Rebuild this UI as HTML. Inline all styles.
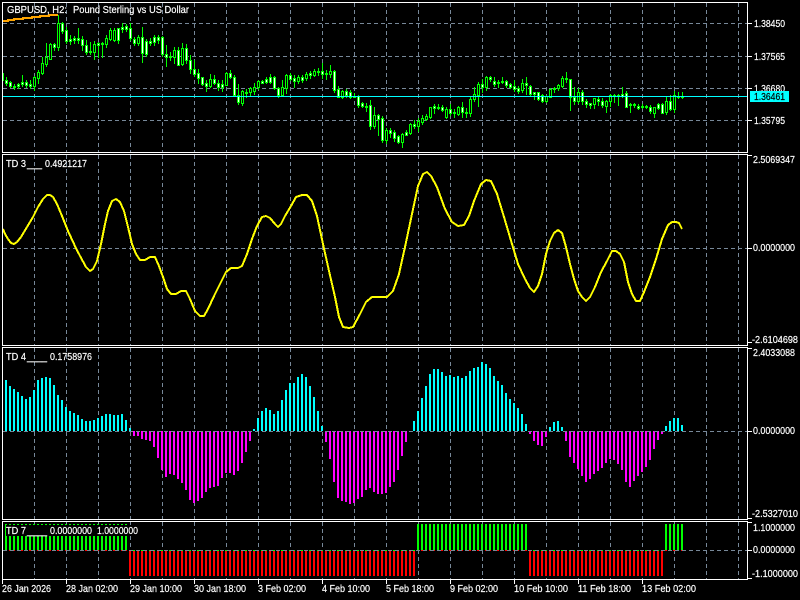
<!DOCTYPE html>
<html><head><meta charset="utf-8"><title>GBPUSD, H2</title>
<style>
html,body{margin:0;padding:0;background:#000;width:800px;height:600px;overflow:hidden}
svg{display:block;position:absolute;left:0;top:0}
text{font-family:"Liberation Sans",sans-serif;font-size:10.5px;fill:#fff;stroke:#fff;stroke-width:.2px}
</style></head><body>
<svg xmlns="http://www.w3.org/2000/svg" width="800" height="600" viewBox="0 0 800 600">
<rect width="800" height="600" fill="#000"/>
<g id="grid" shape-rendering="crispEdges"></g>
<g id="cand" shape-rendering="crispEdges"></g>
<polyline fill="none" stroke="#ffa500" stroke-width="2" shape-rendering="crispEdges" points="3,21 8,21 8,20 14,20 14,19 23,19 23,18 32,18 32,17 40,17 40,16 49,16 49,15 58,15"/>
<path d="M3 96.5H747" stroke="#00ffff" stroke-width="1" shape-rendering="crispEdges"/>
<polyline fill="none" stroke="#ffff00" stroke-width="2" stroke-linejoin="round" shape-rendering="crispEdges" points="3,229 5,234 8,239 11,243 14,244 17,242 21,237 27,227 33,217 38,207 43,199 47,195 50,195 53,197 57,204 62,216 68,231 74,244 80,256 86,267 90,271 93,269 97,261 101,244 105,224 108,211 112,201 116,199 120,202 124,211 128,227 132,244 136,254 140,260 145,260 150,257 155,257 159,266 163,277 167,289 171,294 176,294 181,291 186,291 190,299 195,311 200,316 204,316 208,309 214,296 220,284 226,272 231,268 238,268 242,266 247,254 252,239 257,226 262,217 266,216 270,218 275,224 278,227 281,224 285,216 291,206 296,197 302,195 307,195 312,201 317,216 323,244 329,271 335,297 339,317 343,327 349,328 353,327 360,314 366,302 372,297 380,297 387,297 393,291 399,274 405,247 412,214 418,186 423,174 427,172 431,176 437,187 445,209 452,222 458,226 464,225 469,216 474,201 481,184 486,180 491,181 497,194 504,217 512,244 518,264 525,279 530,288 534,292 538,286 542,274 546,254 550,241 554,233 558,230 562,233 566,247 570,264 574,279 578,291 582,297 586,301 590,297 595,287 601,272 607,261 612,251 616,251 620,254 624,262 628,282 632,294 636,301 640,301 644,292 650,277 656,259 662,239 668,225 672,222 676,222 679,223 682,229"/>
<g id="hist" shape-rendering="crispEdges"></g>
<rect x="6" y="525" width="134" height="11" fill="#000"/>
<g id="zero" shape-rendering="crispEdges"></g>
<path shape-rendering="crispEdges" fill="none" stroke="#fff" stroke-width="1" d="M2.5 2.5H747.5V152.5H2.5ZM2.5 154.5H747.5V345.5H2.5ZM2.5 347.5H747.5V519.5H2.5ZM2.5 521.5H747.5V579.5H2.5Z
M748 23.5h4M748 56.5h4M748 88.5h4M748 120.5h4M748 155.5h4M748 248.5h4M748 342.5h4M748 348.5h4M748 431.5h4M748 518.5h4M748 522.5h4M748 550.5h4M748 578.5h4
M2.5 580v4M66.5 580v4M130.5 580v4M194.5 580v4M258.5 580v4M322.5 580v4M386.5 580v4M450.5 580v4M514.5 580v4M578.5 580v4M642.5 580v4"/>
<text x="7" y="13" textLength="60" lengthAdjust="spacingAndGlyphs">GBPUSD, H2:</text>
<text x="73" y="13" textLength="116" lengthAdjust="spacingAndGlyphs">Pound Sterling vs US Dollar</text>
<text x="6" y="167" textLength="20" lengthAdjust="spacingAndGlyphs">TD 3</text>
<text x="27" y="167" textLength="15" lengthAdjust="spacingAndGlyphs">___</text>
<text x="45" y="167" textLength="42" lengthAdjust="spacingAndGlyphs">0.4921217</text>
<text x="6" y="360" textLength="20" lengthAdjust="spacingAndGlyphs">TD 4</text>
<text x="27" y="360" textLength="20" lengthAdjust="spacingAndGlyphs">____</text>
<text x="50" y="360" textLength="42" lengthAdjust="spacingAndGlyphs">0.1758976</text>
<text x="6" y="534" textLength="20" lengthAdjust="spacingAndGlyphs">TD 7</text>
<text x="27" y="534" textLength="20" lengthAdjust="spacingAndGlyphs">____</text>
<text x="50" y="534" textLength="42" lengthAdjust="spacingAndGlyphs">0.0000000</text>
<text x="97" y="534" textLength="41" lengthAdjust="spacingAndGlyphs">1.0000000</text>
<text x="754" y="27" textLength="31" lengthAdjust="spacingAndGlyphs">1.38450</text>
<text x="754" y="60" textLength="31" lengthAdjust="spacingAndGlyphs">1.37565</text>
<text x="754" y="92" textLength="31" lengthAdjust="spacingAndGlyphs">1.36680</text>
<text x="754" y="124" textLength="31" lengthAdjust="spacingAndGlyphs">1.35795</text>
<rect x="750" y="91" width="39" height="11" fill="#00ffff"/>
<text x="754" y="100" textLength="31" lengthAdjust="spacingAndGlyphs" style="fill:#000;stroke:#000">1.36461</text>
<text x="753" y="163" textLength="42" lengthAdjust="spacingAndGlyphs">2.5069347</text>
<text x="753" y="251" textLength="42" lengthAdjust="spacingAndGlyphs">0.0000000</text>
<text x="752" y="343" textLength="46" lengthAdjust="spacingAndGlyphs">-2.6104698</text>
<text x="753" y="356" textLength="42" lengthAdjust="spacingAndGlyphs">2.4033088</text>
<text x="753" y="434" textLength="42" lengthAdjust="spacingAndGlyphs">0.0000000</text>
<text x="752" y="517" textLength="46" lengthAdjust="spacingAndGlyphs">-2.5327010</text>
<text x="753" y="531" textLength="42" lengthAdjust="spacingAndGlyphs">1.1000000</text>
<text x="753" y="553" textLength="42" lengthAdjust="spacingAndGlyphs">0.0000000</text>
<text x="752" y="577" textLength="46" lengthAdjust="spacingAndGlyphs">-1.1000000</text>
<text x="2" y="592" textLength="49" lengthAdjust="spacingAndGlyphs">26 Jan 2026</text>
<text x="66" y="592" textLength="52" lengthAdjust="spacingAndGlyphs">28 Jan 02:00</text>
<text x="130" y="592" textLength="52" lengthAdjust="spacingAndGlyphs">29 Jan 10:00</text>
<text x="194" y="592" textLength="52" lengthAdjust="spacingAndGlyphs">30 Jan 18:00</text>
<text x="258" y="592" textLength="48" lengthAdjust="spacingAndGlyphs">3 Feb 02:00</text>
<text x="322" y="592" textLength="48" lengthAdjust="spacingAndGlyphs">4 Feb 10:00</text>
<text x="386" y="592" textLength="48" lengthAdjust="spacingAndGlyphs">5 Feb 18:00</text>
<text x="450" y="592" textLength="48" lengthAdjust="spacingAndGlyphs">9 Feb 02:00</text>
<text x="514" y="592" textLength="54" lengthAdjust="spacingAndGlyphs">10 Feb 10:00</text>
<text x="578" y="592" textLength="53" lengthAdjust="spacingAndGlyphs">11 Feb 18:00</text>
<text x="642" y="592" textLength="54" lengthAdjust="spacingAndGlyphs">13 Feb 02:00</text>
</svg>
<script>
(function(){
var C=[[77,85,80,83,1],[81,87,82,86,1],[84,89,86,87,1],[83,88,84,86,1],[75,86,82,84,1],[80,87,82,85,1],[80,88,84,86,1],[76,90,77,86,0],[70,83,72,78,0],[57,74,63,73,0],[43,66,57,64,0],[43,59,44,59,0],[43,50,44,47,1],[15,50,23,47,0],[22,33,23,31,1],[27,43,30,41,1],[35,44,39,41,1],[36,43,38,40,1],[28,43,38,40,1],[36,50,39,45,1],[40,54,45,52,1],[42,54,51,52,1],[41,59,44,52,0],[42,57,43,45,1],[42,57,43,44,1],[35,47,38,44,0],[28,40,30,39,0],[28,41,30,40,0],[28,43,28,40,1],[23,32,27,29,1],[24,31,26,29,1],[23,40,28,38,1],[37,45,39,43,1],[35,45,37,43,0],[27,62,37,53,1],[39,56,41,54,1],[38,45,41,43,1],[35,45,37,42,1],[35,43,37,40,1],[36,56,37,54,1],[45,66,54,57,1],[52,60,56,57,1],[47,63,50,57,0],[47,65,50,65,1],[43,65,48,64,0],[44,63,48,60,1],[55,73,60,69,1],[60,76,69,74,1],[69,83,73,78,1],[77,85,77,84,1],[80,91,83,86,1],[74,87,79,86,0],[75,84,79,83,1],[80,90,83,87,1],[80,91,84,87,1],[72,85,73,85,0],[70,78,73,77,1],[75,95,77,95,1],[84,104,95,102,1],[90,105,91,103,0],[89,97,92,93,1],[87,95,88,92,0],[83,94,87,91,0],[80,89,81,87,0],[80,83,81,83,1],[77,83,79,82,1],
[74,83,77,82,1],[76,89,77,88,1],[87,97,88,95,1],[80,95,87,95,0],[74,93,75,88,0],[73,80,75,79,1],[75,87,78,81,1],[75,83,77,81,0],[75,82,77,80,1],[72,80,74,78,0],[71,78,73,75,1],[69,76,71,75,0],[68,75,71,72,1],[63,78,71,74,1],[70,79,73,74,1],[65,77,71,74,0],[70,92,71,90,1],[86,97,89,97,1],[90,98,91,97,0],[89,97,91,95,1],[90,98,92,97,1],[93,97,96,97,1],[95,107,96,105,1],[102,107,103,106,1],[103,111,106,107,1],[100,129,105,126,1],[107,128,115,126,0],[114,135,115,119,1],[116,142,118,140,1],[128,143,130,140,0],[128,137,130,133,1],[130,141,132,138,1],[135,143,136,142,1],[133,147,134,142,0],[130,135,132,135,1],[123,134,124,133,0],[120,128,124,126,1],[118,131,121,126,0],[115,124,118,122,0],[114,120,116,119,0],[107,118,107,117,0],[104,113,106,108,1],[104,109,107,108,1],[105,111,107,110,1],[107,118,109,117,0],[104,115,109,113,1],[109,117,112,113,1],[106,115,107,114,0],[102,117,107,112,1],[108,117,112,113,1],[97,116,99,113,0],[87,101,94,99,0],[82,106,84,95,0],[79,92,84,87,1],[76,90,77,87,0],[76,81,77,79,1],[77,86,81,84,1],[80,87,82,83,1],[77,83,81,82,1],[80,87,81,85,1],[83,88,84,87,1],[80,91,86,89,1],[86,93,88,91,1],[79,92,83,90,0],[77,94,83,85,1],[85,95,86,94,1],[92,99,92,94,1],[92,100,92,99,1],
[94,102,95,101,1],[95,102,96,101,0],[88,97,89,97,0],[87,92,88,89,1],[84,90,85,88,0],[76,87,78,86,0],[72,82,78,79,1],[79,110,79,97,1],[87,104,97,101,1],[88,103,92,101,0],[90,104,92,101,1],[99,107,101,104,1],[103,108,103,105,1],[98,108,98,104,0],[97,105,99,101,1],[98,107,101,105,1],[100,112,101,106,0],[94,106,95,101,0],[94,102,95,96,1],[94,105,95,96,1],[87,97,94,96,1],[91,107,93,107,1],[103,112,104,105,1],[103,107,104,105,1],[104,109,106,108,1],[104,108,106,107,1],[105,108,106,107,1],[105,113,107,111,1],[107,117,107,113,0],[103,109,104,108,1],[103,113,104,113,1],[97,114,101,112,0],[95,110,101,109,1],[91,112,95,109,0],[92,98,96,97,1],[92,98,96,97,1]];
var s='',x=6,i,c;
s+='<path d="M3.5 73V81" stroke="#0f0"/>';
for(i=0;i<C.length;i++,x+=4){c=C[i];
 s+='<path d="M'+(x+.5)+' '+c[0]+'V'+(c[1]+1)+'" stroke="#0f0"/>';
 s+='<rect x="'+(x-.5)+'" y="'+(c[2]+.5)+'" width="2" height="'+Math.max(c[3]-c[2],1)+'" fill="'+(c[4]?'#fff':'#000')+'" stroke="#0f0"/>';
}
document.getElementById('cand').innerHTML=s;

var D="",k,y;
for(k=34;k<=738;k+=32){D+='M'+(k+.5)+' 3V152M'+(k+.5)+' 155V345M'+(k+.5)+' 348V519M'+(k+.5)+' 522V579';}
[23,56,88,120,248].forEach(function(v){D+='M3 '+(v+.5)+'H747';});
document.getElementById('grid').innerHTML='<path d="'+D+'" fill="none" stroke="#778899" stroke-dasharray="4 3"/>';

var H=[[6,'c',[120,138,147,156,168,177,171,150,120,114,111,114,135,165,180,201,213,219,225,237,243,243,240,234,228,222,222,225,225,222,240,264]],
[134,'m',[288,288,297,300,303,321,354,390,411,402,405,417,429,450,480,489,483,474,456,444,441,438,414,399,399,405,393,369,336,303]],
[254,'c',[267,234,213,204,210,222,213,180,150,129,129,111,102,111,138,171,213,258]],
[326,'m',[306,357,426,474,483,486,492,489,477,471,450,444,456,462,462,459,441,426,390,348,306]],
[414,'c',[243,213,174,138,102,87,87,96,108,105,111,108,114,108,93,84,81,66,72,84,108,123,135,159,177,189,204,222,252]],
[530,'m',[282,303,315,318,291]],
[550,'c',[261,246,243,261]],
[566,'m',[303,351,369,387,408,426,417,402,393,384,369,357,360,372,390,426,441,423,408,396,381,360,327,300,282]],
[666,'c',[258,243,234,234,255]]];
var pc='',pm='';
H.forEach(function(g){g[2].forEach(function(v,j){var X=g[0]+4*j,Y=Math.round(340+v/3);
 if(g[1]=='c')pc+='M'+X+' '+Y+'V431';else pm+='M'+X+' 431V'+Y;});});
var pg='',pr='',pgt='',prt='';
function seg(a,b,green){for(var X=a;X<=b;X+=4){if(green){pg+='M'+X+' 524V550';prt+='M'+X+' 550V551';}else{pr+='M'+X+' 551V576';pgt+='M'+X+' 550V551';}}}
seg(6,126,1);seg(130,414,0);seg(418,526,1);seg(530,662,0);seg(666,682,1);
document.getElementById('hist').innerHTML='<path d="'+pc+'" stroke="#0ff" stroke-width="2"/><path d="'+pm+'" stroke="#f0f" stroke-width="2"/><path d="'+pg+pgt+'" stroke="#0f0" stroke-width="2"/><path d="'+pr+prt+'" stroke="#f00" stroke-width="2"/>';
document.getElementById('zero').innerHTML='<path d="M3 431.5H747M3 550.5H747" stroke="#778899" stroke-dasharray="4 3"/>';
})();
</script>
</body></html>
